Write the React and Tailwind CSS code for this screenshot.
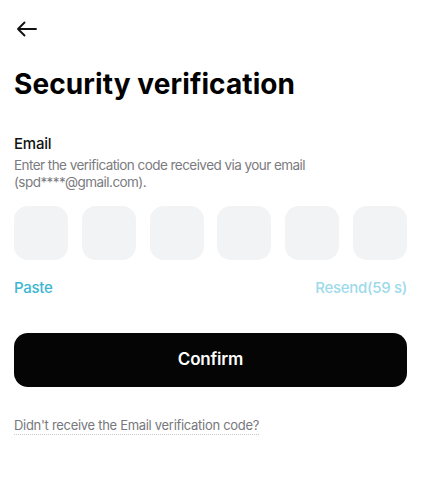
import React from 'react';

const VerificationPage = () => {
    const boxes = [0, 1, 2, 3, 4, 5];

    return (
        <div className="w-[421px] h-[481px] bg-white px-[14px] font-['Inter',sans-serif] text-black">
            {/* Back */}
            <div className="pt-[21px]">
                <svg width="21" height="16" viewBox="0 0 21 16" fill="none" className="ml-[2px] block">
                    <path d="M20 8H2M8.5 1.5L2 8l6.5 6.5" stroke="#111" strokeWidth="1.9" strokeLinecap="round" strokeLinejoin="round" />
                </svg>
            </div>

            {/* Title */}
            <h1 className="mt-[30px] text-[28px] leading-[34px] font-bold tracking-[0.1px]">Security verification</h1>

            {/* Email */}
            <p className="mt-[33px] text-[15px] leading-[20px] font-medium text-[#111] tracking-[-0.2px]">Email</p>
            <p className="mt-[3px] text-[13.5px] leading-[17px] text-[#7b7b80] tracking-[-0.55px] pr-[100px]">
                Enter the verification code received via your email (spd****@gmail.com).
            </p>

            {/* Code boxes */}
            <div className="mt-[15px] flex gap-[13.6px]">
                {boxes.map((i) => (
                    <div key={i} className="flex-1 h-[54px] rounded-[14px] bg-[#f2f3f5]" />
                ))}
            </div>

            {/* Actions */}
            <div className="mt-[18px] flex justify-between items-center text-[15px] leading-[20px] font-medium tracking-[-0.3px]">
                <span className="text-[#3bb6d2]">Paste</span>
                <span className="text-[#9ddaea]">Resend(59 s)</span>
            </div>

            <button className="mt-[35px] w-full h-[54px] rounded-[14px] bg-[#050505] text-white text-[17px] font-semibold tracking-[-0.2px]">
                Confirm
            </button>

            <div className="mt-[28px] leading-[18px]">
                <span className="text-[13px] leading-[18px] text-[#77777c] tracking-[-0.3px] border-b border-dotted border-[#c8c8cc] pb-[1px]">
                    Didn't receive the Email verification code?
                </span>
            </div>
        </div>
    );
};

export default function App() {
    return <VerificationPage />;
}
